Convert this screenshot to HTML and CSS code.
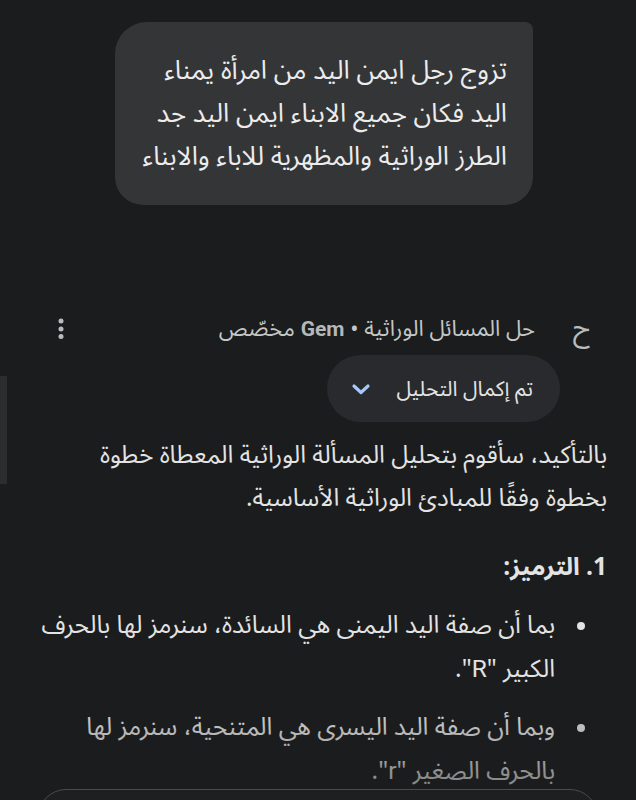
FILE: index.html
```html
<!DOCTYPE html>
<html lang="ar" dir="rtl">
    <head>
        <meta charset="UTF-8" />
        <meta name="viewport" content="width=device-width, initial-scale=1.0" />
        <title>Gemini - حل المسائل الوراثية</title>
        <link rel="stylesheet" href="styles.css">
    </head>
    <body>
        <div class="edge-bar"></div>
        <main class="chat">
            <div class="user-row">
                <div class="user-bubble">
                    تزوج رجل ايمن اليد من امرأة يمناء اليد فكان جميع الابناء ايمن اليد جد الطرز الوراثية والمظهرية للاباء والابناء
                </div>
            </div>

            <section class="response">
                <div class="response-header">
                    <span class="avatar">ح</span>
                    <span class="gem-name">حل المسائل الوراثية • <span class="latin">Gem</span> مخصّص</span>
                    <button type="button" class="menu-button" aria-label="المزيد">
                        <svg width="6" height="22" viewBox="0 0 6 22">
                            <circle cx="3" cy="3" r="2.5" />
                            <circle cx="3" cy="11" r="2.5" />
                            <circle cx="3" cy="18.5" r="2.5" />
                        </svg>
                    </button>
                </div>

                <div class="thinking-row">
                    <button type="button" class="thinking-pill">
                        <span>تم إكمال التحليل</span>
                        <svg width="22" height="16" viewBox="0 0 22 16">
                            <path d="M4 5 L11 11.5 L18 5" fill="none" stroke="#a8c7fa" stroke-width="3.2" stroke-linecap="round" stroke-linejoin="round" />
                        </svg>
                    </button>
                </div>

                <div class="answer">
                    <p>بالتأكيد، سأقوم بتحليل المسألة الوراثية المعطاة خطوة بخطوة وفقًا للمبادئ الوراثية الأساسية.</p>
                    <h3>1. الترميز:</h3>
                    <ul>
                        <li>بما أن صفة اليد اليمنى هي السائدة، سنرمز لها بالحرف الكبير "<span class="latin">R</span>".</li>
                        <li>وبما أن صفة اليد اليسرى هي المتنحية، سنرمز لها بالحرف الصغير "<span class="latin">r</span>".</li>
                    </ul>
                </div>
            </section>
        </main>
        <div class="fade"></div>
        <div class="input-box"></div>
    </body>
</html>
```

FILE: styles.css
```css
* {
    box-sizing: border-box;
    padding: 0;
    margin: 0;
}

body {
    background-color: #1b1c1d;
    font-family: "Noto Sans Arabic", "DejaVu Sans", sans-serif;
    color: #e3e3e3;
    height: 100vh;
    overflow: hidden;
}

.latin {
    font-family: Roboto, "Liberation Sans", sans-serif;
}

.chat {
    display: flex;
    flex-direction: column;
}

.user-row {
    display: flex;
    padding: 22px 103px 0 0;
}
.user-bubble {
    width: 418px;
    background-color: #333537;
    border-radius: 32px 8px 28px 28px;
    padding: 27px 26px 27px 12px;
    font-size: 26px;
    line-height: 43px;
    color: #ececec;
}

.response {
    padding-top: 106px;
}
.response-header {
    display: flex;
    align-items: center;
    padding: 0 42px 0 54px;
    height: 36px;
}
.avatar {
    font-size: 28px;
    color: #b9bcbf;
    width: 24px;
    margin-left: 35px;
    text-align: center;
}
.gem-name {
    font-size: 22px;
    color: #c4c7c5;
}
.gem-name .latin {
    font-weight: 700;
    font-size: 21px;
    color: #b5b8bb;
}
.menu-button {
    margin-right: auto;
    background: none;
    border: none;
    display: flex;
    padding: 0 4px;
}
.menu-button svg {
    fill: #b9bcbf;
}

.thinking-row {
    display: flex;
    padding: 8px 76px 0 0;
}
.thinking-pill {
    display: flex;
    align-items: center;
    gap: 24px;
    height: 67px;
    padding: 0 27px 0 0;
    width: 233px;
    border: none;
    border-radius: 34px;
    background-color: #282a2d;
    color: #e3e3e3;
    font-family: inherit;
    font-size: 21px;
}

.answer {
    padding: 12px 29px 0 40px;
    font-size: 24.5px;
    line-height: 43px;
}
.answer p {
    margin-bottom: 26px;
}
.answer h3 {
    font-size: 24.5px;
    font-weight: 700;
    margin-bottom: 15px;
}
.answer ul {
    list-style: none;
    padding-right: 52px;
}
.answer li {
    position: relative;
    margin-bottom: 15px;
}
.answer li::before {
    content: "";
    position: absolute;
    right: -30px;
    top: 18px;
    width: 8px;
    height: 8px;
    border-radius: 50%;
    background-color: #e3e3e3;
}

.edge-bar {
    position: absolute;
    left: 0;
    top: 376px;
    width: 7px;
    height: 108px;
    background-color: #2c2d2f;
}

.fade {
    position: absolute;
    left: 0;
    right: 0;
    top: 690px;
    height: 110px;
    background: linear-gradient(to bottom, rgba(27, 28, 29, 0), rgba(27, 28, 29, 0.55));
}

.input-box {
    position: absolute;
    left: 38px;
    right: 38px;
    top: 789px;
    height: 80px;
    border: 1.5px solid #4a4b4d;
    border-radius: 28px;
    background-color: #1e1f20;
}
```
